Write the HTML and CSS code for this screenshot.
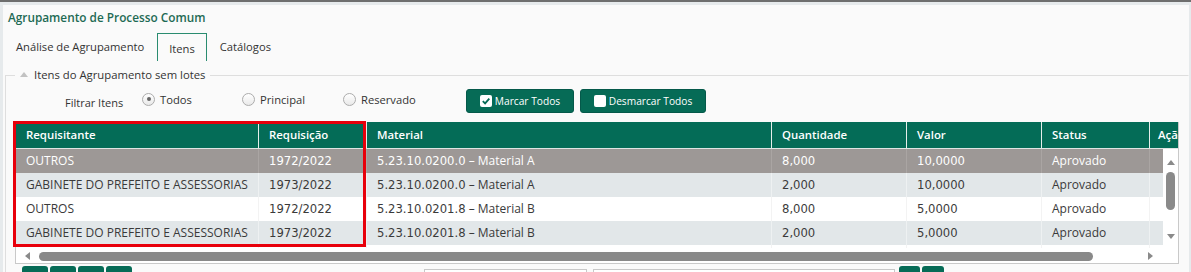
FILE: index.html
```html
<!DOCTYPE html>
<html lang="pt-BR">

<head>
    <meta charset="UTF-8">
    <meta name="viewport" content="width=device-width, initial-scale=1.0">
    <title>Agrupamento de Processo Comum</title>
    <link rel="stylesheet" href="styles.css">
</head>

<body>

    <div class="panel">
        <h1 class="title">Agrupamento de Processo Comum</h1>

        <div class="tabs">
            <span class="tab">Análise de Agrupamento</span>
            <span class="tab active">Itens</span>
            <span class="tab">Catálogos</span>
        </div>

        <fieldset class="group">
            <legend><span class="tri"></span>Itens do Agrupamento sem lotes</legend>

            <!-- filtro -->
            <div class="filter">
                <span class="filter-label">Filtrar Itens</span>
                <label class="radio r1"><span class="circle on"></span>Todos</label>
                <label class="radio r2"><span class="circle"></span>Principal</label>
                <label class="radio r3"><span class="circle"></span>Reservado</label>
                <button class="gbtn b1">
                    <svg class="chk" width="12" height="12" viewBox="0 0 12 12">
                        <rect x="0" y="0" width="12" height="12" rx="2" fill="#fff" />
                        <path d="M2.8 6.1 L5.1 8.4 L9.3 3.6" stroke="#066b56" stroke-width="1.8" fill="none" />
                    </svg>
                    Marcar Todos
                </button>
                <button class="gbtn b2">
                    <svg class="chk" width="12" height="12" viewBox="0 0 12 12">
                        <rect x="0" y="0" width="12" height="12" rx="2" fill="#fff" />
                    </svg>
                    Desmarcar Todos
                </button>
            </div>

            <!-- tabela -->
            <div class="grid-wrap">
                <div class="grid">
                    <div class="head">
                        <span class="c c1">Requisitante</span>
                        <span class="c c2">Requisição</span>
                        <span class="c c3">Material</span>
                        <span class="c c4">Quantidade</span>
                        <span class="c c5">Valor</span>
                        <span class="c c6">Status</span>
                        <span class="c c7">Ação</span>
                    </div>
                    <div class="body">
                        <div class="rows">
                            <div class="row sel">
                                <span class="c c1">OUTROS</span>
                                <span class="c c2 num">1972/2022</span>
                                <span class="c c3"><span class="num">5.23.10.0200.0</span> – Material A</span>
                                <span class="c c4 num">8,000</span>
                                <span class="c c5 num">10,0000</span>
                                <span class="c c6">Aprovado</span>
                                <span class="c c7"></span>
                            </div>
                            <div class="row alt">
                                <span class="c c1">GABINETE DO PREFEITO E ASSESSORIAS</span>
                                <span class="c c2 num">1973/2022</span>
                                <span class="c c3"><span class="num">5.23.10.0200.0</span> – Material A</span>
                                <span class="c c4 num">2,000</span>
                                <span class="c c5 num">10,0000</span>
                                <span class="c c6">Aprovado</span>
                                <span class="c c7"></span>
                            </div>
                            <div class="row">
                                <span class="c c1">OUTROS</span>
                                <span class="c c2 num">1972/2022</span>
                                <span class="c c3"><span class="num">5.23.10.0201.8</span> – Material B</span>
                                <span class="c c4 num">8,000</span>
                                <span class="c c5 num">5,0000</span>
                                <span class="c c6">Aprovado</span>
                                <span class="c c7"></span>
                            </div>
                            <div class="row alt">
                                <span class="c c1">GABINETE DO PREFEITO E ASSESSORIAS</span>
                                <span class="c c2 num">1973/2022</span>
                                <span class="c c3"><span class="num">5.23.10.0201.8</span> – Material B</span>
                                <span class="c c4 num">2,000</span>
                                <span class="c c5 num">5,0000</span>
                                <span class="c c6">Aprovado</span>
                                <span class="c c7"></span>
                            </div>
                            <div class="row">
                                <span class="c c1"></span>
                                <span class="c c2"></span>
                                <span class="c c3"></span>
                                <span class="c c4"></span>
                                <span class="c c5"></span>
                                <span class="c c6"></span>
                                <span class="c c7"></span>
                            </div>
                        </div>
                        <div class="vscroll">
                            <span class="arr-up"></span>
                            <span class="vthumb"></span>
                            <span class="arr-down"></span>
                        </div>
                    </div>
                    <div class="hscroll">
                        <span class="arr-left"></span>
                        <span class="hthumb"></span>
                        <span class="arr-right"></span>
                    </div>
                </div>
                <div class="mark"></div>
            </div>

            <!-- paginação -->
            <div class="pager">
                <span class="pbtn"></span>
                <span class="pbtn"></span>
                <span class="pbtn"></span>
                <span class="pbtn"></span>
                <span class="pinput i1"></span>
                <span class="pinput i2"></span>
                <span class="pbtn s1"></span>
                <span class="pbtn s2"></span>
            </div>
        </fieldset>
    </div>

</body>

</html>
```

FILE: styles.css
```css
* {
    box-sizing: border-box;
}

html,
body {
    height: 272px;
    overflow: hidden;
}

body {
    margin: 0;
    background: #e6eaec;
    border-top: 2px solid #6e6e6e;
    font-family: "Open Sans", "Liberation Sans", sans-serif;
    font-size: 12px;
    color: #333;
}

.panel {
    margin: 3px 2px 0 3px;
    padding-top: 4px;
    height: 400px;
    background: #fafafa;
}

.title {
    margin: 0 0 0 5px;
    font-size: 11.8px;
    font-weight: 600;
    line-height: 17px;
    color: #1e6a54;
}

/* abas */
.tabs {
    display: flex;
    margin-top: 7px;
    height: 28px;
    font-size: 11.2px;
}

.tab {
    padding: 0 12px 2px;
    line-height: 26px;
    border: 1px solid transparent;
    border-bottom: none;
    color: #333;
}

.tab.active {
    padding: 2px 11px 0;
    border-color: #2a8c70;
}

/* grupo */
.group {
    margin: 6px 0 0 2px;
    padding: 0 0 0 9px;
    border: 1px solid #dedede;
    border-right-color: transparent;
    min-width: 0;
}

.group legend {
    padding: 0 5px;
    line-height: 16px;
    font-size: 11.3px;
    color: #333;
}

.tri {
    display: inline-block;
    width: 0;
    height: 0;
    margin: 0 6px 2px 0;
    border-left: 4px solid transparent;
    border-right: 4px solid transparent;
    border-bottom: 5px solid #c2c2c2;
    vertical-align: middle;
}

.filter {
    display: flex;
    align-items: center;
    height: 24px;
    margin-top: 6px;
    padding-left: 50px;
    font-size: 11.2px;
}

.filter-label {
    width: 77px;
    padding-top: 3px;
    font-size: 11px;
}

.radio {
    display: flex;
    align-items: center;
    margin-top: -4px;
}

.r1 { width: 100px; }
.r2 { width: 101px; }
.r3 { width: 123px; }

.circle {
    position: relative;
    width: 13px;
    height: 13px;
    margin-right: 5px;
    border: 1px solid #acacac;
    border-radius: 50%;
    background: linear-gradient(#ffffff, #e9e9e9);
}

.circle.on::after {
    content: "";
    position: absolute;
    left: 3.5px;
    top: 3.5px;
    width: 4px;
    height: 4px;
    border-radius: 50%;
    background: #666;
}

.gbtn {
    display: flex;
    align-items: center;
    justify-content: center;
    gap: 3px;
    height: 24px;
    margin: 0;
    padding: 0;
    border: 1px solid #05594a;
    border-radius: 3px;
    background: #066b56;
    color: #fff;
    font-family: inherit;
    font-size: 10.2px;
}

.b1 {
    width: 108px;
    margin-right: 6px;
}

.b2 {
    width: 126px;
}

/* tabela */
.grid-wrap {
    position: relative;
    width: 1164px;
    margin-top: 9px;
}

.grid {
    width: 1164px;
    overflow: hidden;
    border: 1px solid #c9c9c9;
    border-top: none;
}

.head {
    display: flex;
    height: 27px;
    background: #046c57;
    color: #fff;
    font-size: 11.4px;
    font-weight: 600;
    border-bottom: 1px solid #dfe5e3;
    white-space: nowrap;
}

.c {
    flex: none;
    overflow: hidden;
    padding-left: 10px;
    white-space: nowrap;
}

.head .c {
    line-height: 26px;
    border-right: 1px solid #e6eeeb;
}

.c1 { width: 243px; }
.c2 { width: 108px; }
.c3 { width: 405px; }
.c4 { width: 135px; }
.c5 { width: 135px; }
.c6 { width: 108px; }
.c7 { width: 100px; padding-left: 8px; }

.num {
    font-family: "DejaVu Sans", "Open Sans", sans-serif;
    font-size: 11.6px;
}

.body {
    display: flex;
    height: 99px;
    background: #fff;
}

.rows {
    width: 1147px;
    overflow: hidden;
}

.row {
    display: flex;
    height: 24px;
    background: #fff;
    color: #3a3a3a;
}

.row .c {
    line-height: 24px;
    border-right: 1px solid #f3f3f3;
}

.row.alt {
    background: #e2e7e9;
}

.row.alt .c {
    border-right-color: #eef1f2;
}

.row.sel {
    background: #9d9896;
    color: #fff;
}

.row.sel .c {
    border-right-color: #aaa5a3;
}

.vscroll {
    display: flex;
    flex-direction: column;
    align-items: center;
    width: 15px;
    padding-top: 11px;
    background: #fff;
}

.arr-up,
.arr-down {
    width: 0;
    height: 0;
    border-left: 4.5px solid transparent;
    border-right: 4.5px solid transparent;
}

.arr-up {
    border-bottom: 5px solid #8a8a8a;
}

.arr-down {
    margin-top: 24px;
    border-top: 5px solid #8a8a8a;
}

.vthumb {
    width: 9px;
    height: 38px;
    margin-top: 7px;
    border-radius: 5px;
    background: #8a8a8a;
}

.hscroll {
    display: flex;
    align-items: center;
    height: 15px;
    padding-left: 9px;
    background: #fff;
}

.arr-left,
.arr-right {
    width: 0;
    height: 0;
    border-top: 4px solid transparent;
    border-bottom: 4px solid transparent;
}

.arr-left {
    border-right: 5px solid #8a8a8a;
}

.arr-right {
    margin-left: 55px;
    border-left: 5px solid #8a8a8a;
}

.hthumb {
    width: 1054px;
    height: 9px;
    margin: 2px 0 0 9px;
    border-radius: 5px;
    background: #898989;
}

/* destaque vermelho */
.mark {
    position: absolute;
    left: -2px;
    top: -1px;
    width: 353px;
    height: 126px;
    border: 3px solid #e8000b;
}

/* paginação */
.pager {
    display: flex;
    align-items: flex-start;
    gap: 2px;
    margin-top: 2px;
    padding-left: 7px;
}

.pbtn {
    width: 26px;
    height: 20px;
    border-radius: 3px;
    background: #066b56;
}

.pinput {
    height: 20px;
    margin-top: 3px;
    border: 1px solid #c8c8c8;
    background: #fff;
}

.i1 {
    width: 163px;
    margin-left: 290px;
}

.i2 {
    width: 302px;
    margin-left: 4px;
}

.s1 {
    width: 21px;
    margin-left: 2px;
}

.s2 {
    width: 22px;
}
```
